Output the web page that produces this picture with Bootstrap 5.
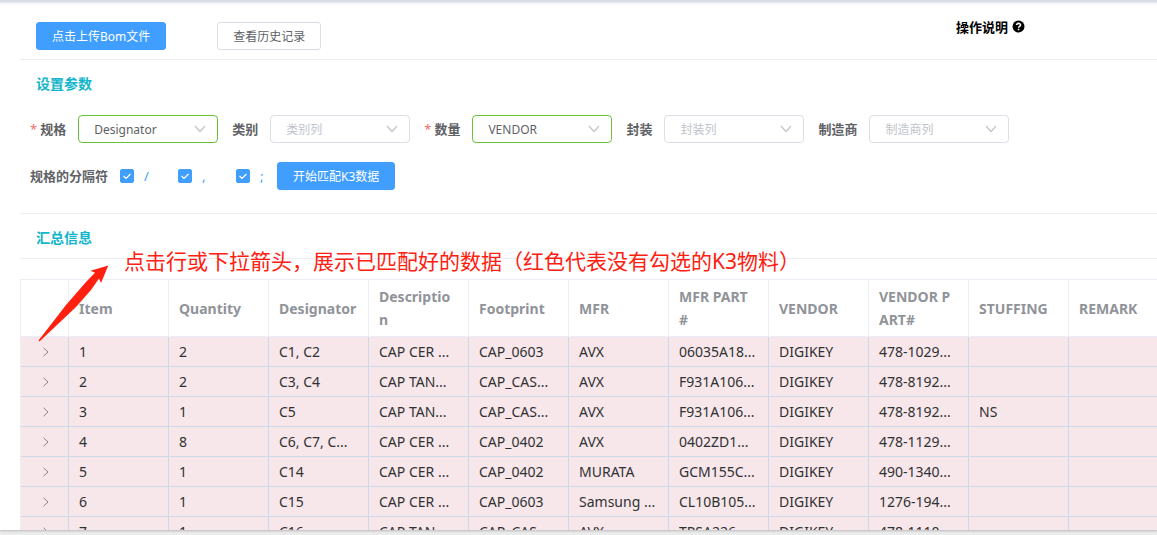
<!DOCTYPE html>
<html lang="zh-CN">
<head>
<meta charset="utf-8">
<meta name="viewport" content="width=device-width, initial-scale=1">
<title>BOM</title>
<link href="https://cdn.jsdelivr.net/npm/bootstrap@5.3.0/dist/css/bootstrap.min.css" rel="stylesheet">
<style>
body{font-family:"Noto Sans","Noto Sans CJK SC",sans-serif;font-size:13px;line-height:20px;color:#606266;background:#ebebeb}
.page-view{background:linear-gradient(#e8eaf0,#fff 3px);border-top:2px solid #d8dce5;box-shadow:0 1px 2px #bbb;margin-bottom:5px;min-height:0}
.page-inner{padding-left:20px}
.top-row{height:58px;padding:10px 132px 0 16px}
.rule{border-bottom:1px solid #ebeef5}
.btn-el{font-size:12px;line-height:18px;padding:5px 15px 3px;border-radius:3px;height:28px;white-space:nowrap}
.btn-blue,.btn-blue:hover{background:#409eff;border-color:#409eff;color:#fff}
.btn-plain,.btn-plain:hover{background:#fff;border-color:#dcdfe6;color:#606266}
.btn-history{margin-left:51px}
.section-title{font-size:14px;font-weight:700;color:#12b5cb;line-height:20px;margin:0;padding-left:16px}
.help-link{color:#000;font-weight:700;text-decoration:none;margin-bottom:18px}
.settings{padding:14px 0 23px}
.fields{gap:14px;padding:21px 0 19px 10px}
.field{display:flex;align-items:center;gap:12px}
.field label,.sep-label{font-weight:700;white-space:nowrap}
.req::before{content:"*";color:#f56c6c;font-weight:400;margin-right:3px}
.pick{width:140px;height:28px;font-size:12px;line-height:18px;padding:5px 30px 3px 15px;border:1px solid #dcdfe6;border-radius:4px;color:#c0c4cc;background-size:12px 8px;background-position:right 11px center;background-image:url("data:image/svg+xml,%3Csvg xmlns='http://www.w3.org/2000/svg' viewBox='0 0 12 8'%3E%3Cpath d='M1 1l5 5.500 5-5.500' fill='none' stroke='%23c0c4cc' stroke-width='1.200'/%3E%3C/svg%3E")}
.pick.chosen{border-color:#67c23a;color:#606266}
.seps{padding-left:10px}
.sep-label{margin-right:12px}
.tick{width:58px;display:flex;align-items:center;gap:10px;color:#409eff}
.tick-last{width:41px}
.tick .form-check-input{width:14px;height:14px;margin:0;border-radius:2px;flex:none}
.tick .form-check-input:checked{border-color:#409eff;background-color:#409eff;background-size:12px 12px;background-image:url("data:image/svg+xml,%3Csvg xmlns='http://www.w3.org/2000/svg' viewBox='0 0 12 12'%3E%3Cpath d='M2.500 6l2.500 2.500L9.500 4' fill='none' stroke='white' stroke-width='1.200'/%3E%3C/svg%3E")}
.summary{padding:14px 0 10px}
.sheet{padding-top:20px}
.bom{table-layout:fixed;width:1149px;border-collapse:separate;border-spacing:0;border-top:1px solid #ebeef5;border-left:1px solid #ebeef5;font-size:14px}
.bom th{height:57px;padding:0 10px;color:#909399;font-weight:700;line-height:23px;word-break:break-all;border-right:1px solid #ebeef5;border-bottom:1px solid #ebeef5}
.bom td{height:30px;padding:0 10px;color:#303133;line-height:23px;white-space:nowrap;overflow:hidden;background:#f7e7ea;border-right:1px solid #cfd8e6;border-bottom:1px solid #cfd8e6}
.bom td:first-child{padding:0 0 0 2px}
.bom .c-open{width:48px}
.bom .c-data{width:100px}
.expand{border:0;background:none;padding:0;display:flex;margin:0 auto}
.note{left:104px;top:-12px;font-size:21px;line-height:28px;color:#ff2010;white-space:nowrap}
.note-arrow{left:16px;top:4px;pointer-events:none}
</style>
</head>
<body class="vh-100 d-flex flex-column overflow-hidden">
<svg class="d-none"><symbol id="chev" viewBox="0 0 8 10"><path d="M1.500 .8L6 5 1.500 9.200" fill="none" stroke="#8c8088" stroke-width="1"/></symbol></svg>
<main class="page-view flex-grow-1 overflow-hidden">
  <div class="page-inner">
    <header class="top-row rule d-flex align-items-center">
      <button type="button" class="btn btn-el btn-blue">点击上传Bom文件</button>
      <button type="button" class="btn btn-el btn-plain btn-history">查看历史记录</button>
      <a href="#" class="help-link d-flex align-items-center ms-auto gap-1">操作说明
        <svg width="13" height="13" viewBox="0 0 12 12"><circle cx="6" cy="6" r="5.500"/><path d="M4.200 4.700C4.200 2.600 7.900 2.600 7.900 4.600 7.900 5.900 6.100 5.800 6.100 7.200M6.100 8.100V9.400" fill="none" stroke="#fff" stroke-width="1.400"/></svg>
      </a>
    </header>
    <section class="rule settings">
      <h2 class="section-title">设置参数</h2>
      <form>
        <div class="fields d-flex">
          <div class="field"><label class="req" for="f1">规格</label><select id="f1" class="form-select pick chosen"><option>Designator</option></select></div>
          <div class="field"><label for="f2">类别</label><select id="f2" class="form-select pick"><option>类别列</option></select></div>
          <div class="field"><label class="req" for="f3">数量</label><select id="f3" class="form-select pick chosen"><option>VENDOR</option></select></div>
          <div class="field"><label for="f4">封装</label><select id="f4" class="form-select pick"><option>封装列</option></select></div>
          <div class="field"><label for="f5">制造商</label><select id="f5" class="form-select pick"><option>制造商列</option></select></div>
        </div>
        <div class="seps d-flex align-items-center">
          <span class="sep-label">规格的分隔符</span>
          <label class="tick"><input class="form-check-input" type="checkbox" checked>/</label>
          <label class="tick"><input class="form-check-input" type="checkbox" checked>,</label>
          <label class="tick tick-last"><input class="form-check-input" type="checkbox" checked>;</label>
          <button type="button" class="btn btn-el btn-blue">开始匹配K3数据</button>
        </div>
      </form>
    </section>
    <section class="rule summary"><h2 class="section-title">汇总信息</h2></section>
    <section class="sheet position-relative">
      <table class="bom">
        <colgroup><col class="c-open"><col class="c-data" span="11"></colgroup>
        <thead><tr><th></th><th>Item</th><th>Quantity</th><th>Designator</th><th>Description</th><th>Footprint</th><th>MFR</th><th>MFR PART<br>#</th><th>VENDOR</th><th>VENDOR PART#</th><th>STUFFING</th><th>REMARK</th></tr></thead>
        <tbody>
          <tr><td><button type="button" class="expand" aria-label="展开"><svg width="8" height="10"><use href="#chev"/></svg></button></td><td>1</td><td>2</td><td>C1, C2</td><td>CAP CER ...</td><td>CAP_0603</td><td>AVX</td><td>06035A18...</td><td>DIGIKEY</td><td>478-1029...</td><td></td><td></td></tr>
          <tr><td><button type="button" class="expand" aria-label="展开"><svg width="8" height="10"><use href="#chev"/></svg></button></td><td>2</td><td>2</td><td>C3, C4</td><td>CAP TAN...</td><td>CAP_CAS...</td><td>AVX</td><td>F931A106...</td><td>DIGIKEY</td><td>478-8192...</td><td></td><td></td></tr>
          <tr><td><button type="button" class="expand" aria-label="展开"><svg width="8" height="10"><use href="#chev"/></svg></button></td><td>3</td><td>1</td><td>C5</td><td>CAP TAN...</td><td>CAP_CAS...</td><td>AVX</td><td>F931A106...</td><td>DIGIKEY</td><td>478-8192...</td><td>NS</td><td></td></tr>
          <tr><td><button type="button" class="expand" aria-label="展开"><svg width="8" height="10"><use href="#chev"/></svg></button></td><td>4</td><td>8</td><td>C6, C7, C...</td><td>CAP CER ...</td><td>CAP_0402</td><td>AVX</td><td>0402ZD1...</td><td>DIGIKEY</td><td>478-1129...</td><td></td><td></td></tr>
          <tr><td><button type="button" class="expand" aria-label="展开"><svg width="8" height="10"><use href="#chev"/></svg></button></td><td>5</td><td>1</td><td>C14</td><td>CAP CER ...</td><td>CAP_0402</td><td>MURATA</td><td>GCM155C...</td><td>DIGIKEY</td><td>490-1340...</td><td></td><td></td></tr>
          <tr><td><button type="button" class="expand" aria-label="展开"><svg width="8" height="10"><use href="#chev"/></svg></button></td><td>6</td><td>1</td><td>C15</td><td>CAP CER ...</td><td>CAP_0603</td><td>Samsung ...</td><td>CL10B105...</td><td>DIGIKEY</td><td>1276-194...</td><td></td><td></td></tr>
          <tr><td><button type="button" class="expand" aria-label="展开"><svg width="8" height="10"><use href="#chev"/></svg></button></td><td>7</td><td>1</td><td>C16</td><td>CAP TAN...</td><td>CAP_CAS...</td><td>AVX</td><td>TPSA226...</td><td>DIGIKEY</td><td>478-1110...</td><td></td><td></td></tr>
        </tbody>
      </table>
      <div class="note position-absolute">点击行或下拉箭头，展示已匹配好的数据（红色代表没有勾选的K3物料）</div>
      <svg class="note-arrow position-absolute" width="76" height="84" viewBox="0 0 76 84"><path d="M72.300 2.500L54.500 7.700 59 9.700 50 19 30 42 2.500 77.500 3.500 78.500 40 44 55 27 63 15.500 65 20z" fill="#ff2010"/></svg>
    </section>
  </div>
</main>
<script src="https://cdn.jsdelivr.net/npm/bootstrap@5.3.0/dist/js/bootstrap.bundle.min.js"></script>
</body>
</html>
